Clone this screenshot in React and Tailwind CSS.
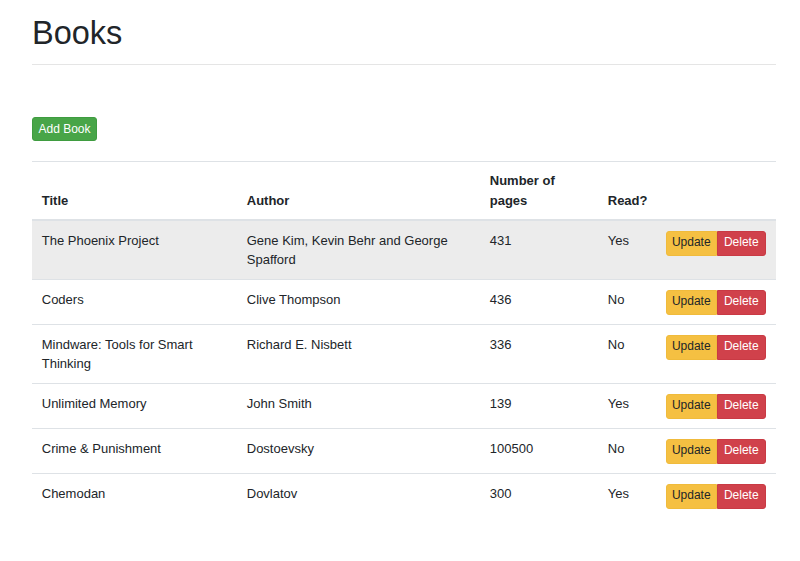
import React from 'react';

const books = [
  { title: 'The Phoenix Project', author: 'Gene Kim, Kevin Behr and George Spafford', pages: 431, read: true },
  { title: 'Coders', author: 'Clive Thompson', pages: 436, read: false },
  { title: 'Mindware: Tools for Smart Thinking', author: 'Richard E. Nisbett', pages: 336, read: false },
  { title: 'Unlimited Memory', author: 'John Smith', pages: 139, read: true },
  { title: 'Crime & Punishment', author: 'Dostoevsky', pages: 100500, read: false },
  { title: 'Chemodan', author: 'Dovlatov', pages: 300, read: true },
];

const App = () => {
  return (
    <div
      className="min-h-[561px] bg-white pl-[32px] pr-[24px] pt-[14px] text-[13px] leading-[19.5px] text-[#212529]"
      style={{ fontFamily: '"Liberation Sans", Arial, sans-serif' }}
    >
      {/* Header */}
      <h1 className="text-[32.5px] leading-[39px] font-normal">Books</h1>
      <hr className="mt-[11px] border-t border-[#e5e5e5]" />

      <button className="mt-[52px] mb-[20px] h-[24px] w-[65px] rounded-[3px] border border-[#3f9c40] bg-[#48a548] text-[12px] leading-[17px] font-medium text-white">
        Add Book
      </button>

      {/* Books table */}
      <table className="w-[744px] table-fixed border-collapse">
        <colgroup>
          <col className="w-[205px]" />
          <col className="w-[243px]" />
          <col className="w-[118px]" />
          <col className="w-[58px]" />
          <col className="w-[120px]" />
        </colgroup>
        <thead>
          <tr>
            <th className="border-t border-b-2 border-[#dee2e6] px-[9.75px] py-[9px] text-left align-bottom font-bold">Title</th>
            <th className="border-t border-b-2 border-[#dee2e6] px-[9.75px] py-[9px] text-left align-bottom font-bold">Author</th>
            <th className="border-t border-b-2 border-[#dee2e6] px-[9.75px] py-[9px] text-left align-bottom font-bold">Number of pages</th>
            <th className="border-t border-b-2 border-[#dee2e6] px-[9.75px] py-[9px] text-left align-bottom font-bold">Read?</th>
            <th className="border-t border-b-2 border-[#dee2e6] px-[9.75px] py-[9px]"></th>
          </tr>
        </thead>
        <tbody>
          {books.map((book, index) => (
            <tr key={index} className={index === 0 ? 'bg-[#ececec]' : ''}>
              <td className={`${index > 0 ? 'border-t border-[#dee2e6]' : ''} px-[9.75px] py-[9.5px] align-top`}>{book.title}</td>
              <td className={`${index > 0 ? 'border-t border-[#dee2e6]' : ''} px-[9.75px] py-[9.5px] align-top`}>{book.author}</td>
              <td className={`${index > 0 ? 'border-t border-[#dee2e6]' : ''} px-[9.75px] py-[9.5px] align-top`}>{book.pages}</td>
              <td className={`${index > 0 ? 'border-t border-[#dee2e6]' : ''} px-[9.75px] py-[9.5px] align-top`}>{book.read ? 'Yes' : 'No'}</td>
              <td className={`${index > 0 ? 'border-t border-[#dee2e6]' : ''} px-[9.75px] py-[9.5px] align-top`}>
                <div className="flex">
                  <button className="h-[25px] w-[51px] rounded-l-[3px] border border-[#f0bb3c] bg-[#f5c042] text-[12px] text-[#212529]">
                    Update
                  </button>
                  <button className="h-[25px] w-[49px] rounded-r-[3px] border border-[#c93a44] bg-[#d0414b] text-[12px] font-medium text-white">
                    Delete
                  </button>
                </div>
              </td>
            </tr>
          ))}
        </tbody>
      </table>
    </div>
  );
};

export default App;
